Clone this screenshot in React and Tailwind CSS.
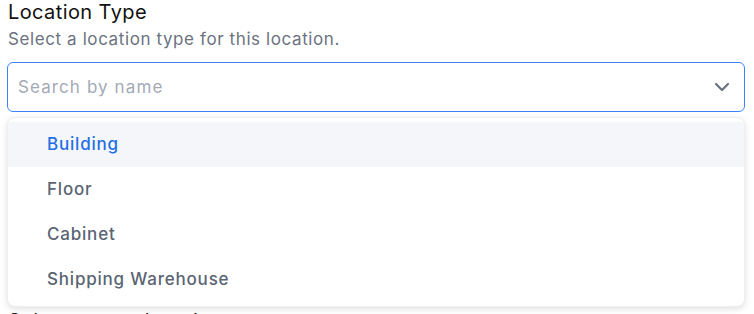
import React from 'react';
import { ChevronDown } from 'lucide-react';

const options = ['Building', 'Floor', 'Cabinet', 'Shipping Warehouse'];

export default function App() {
  const active = 'Building';

  return (
    <div className="w-[754px] h-[314px] overflow-hidden bg-white" style={{ fontFamily: 'Inter, "Noto Sans", sans-serif' }}>
      <div className="ml-[7px] w-[738px]">
        {/* field header */}
        <h2 className="text-[20px] leading-[24px] text-[#111111] tracking-[0.4px] pl-px">Location Type</h2>
        <p className="mt-[3px] text-[17px] leading-[24px] text-[#6b7280] tracking-[0.6px] pl-px">
          Select a location type for this location.
        </p>

        {/* combobox input */}
        <div className="mt-[11px] h-[50px] flex items-center justify-between rounded-md border border-[#3b82f6] pl-[10px] pr-[10px]">
          <span className="pt-px text-[17px] text-[#a3aab5] tracking-[1.1px]">Search by name</span>
          <ChevronDown size={24} strokeWidth={2.2} className="text-[#687282]" />
        </div>

        {/* options list */}
        <ul className="mt-[5px] rounded-lg border border-[#eeeeee] bg-white py-[4px] shadow-[0_2px_6px_rgba(0,0,0,0.12)]">
          {options.map((opt) => (
            <li
              key={opt}
              className={
                opt === active
                  ? 'h-[45px] flex items-center pl-[39px] pt-px bg-[#f5f6fa] text-[17px] font-medium text-[#1f6fe5] tracking-[0.8px]'
                  : 'h-[45px] flex items-center pl-[39px] pt-px text-[17px] font-medium text-[#5a6473] tracking-[0.8px]'
              }
            >
              {opt}
            </li>
          ))}
        </ul>

        <h2 className="mt-[2px] text-[20px] leading-[24px] text-[#222222] tracking-[0.4px] pl-px">Select parent location</h2>
      </div>
    </div>
  );
}
